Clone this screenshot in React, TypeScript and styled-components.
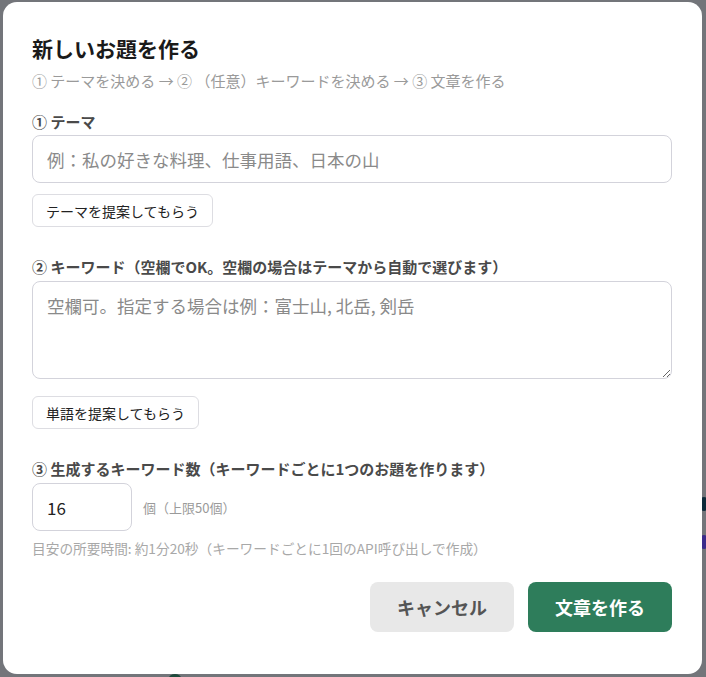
import styled, { createGlobalStyle } from "styled-components";

const GlobalStyle = createGlobalStyle`
  html, body {
    margin: 0;
    padding: 0;
    background: #73757a;
  }
  body {
    font-family: "Noto Sans CJK JP", "Noto Sans", sans-serif;
  }
  * {
    box-sizing: border-box;
  }
`;

export default function App() {
  return (
    <>
      <GlobalStyle />
      <Overlay>
        <PeekDot $top={497} $color="#0d2a3a" />
        <PeekDot $top={535} $color="#3b2a8a" />
        <BottomPeek />
        <Modal>
          <Title>{"新しいお題を作る"}</Title>
          <Steps>{"① テーマを決める → ② （任意）キーワードを決める → ③ 文章を作る"}</Steps>

          <Section $top={22}>
            <Label>{"① テーマ"}</Label>
            <TextInput placeholder={"例：私の好きな料理、仕事用語、日本の山"} />
            <SuggestButton>{"テーマを提案してもらう"}</SuggestButton>
          </Section>

          <Section $top={30}>
            <Label>{"② キーワード（空欄でOK。空欄の場合はテーマから自動で選びます）"}</Label>
            <TextArea placeholder={"空欄可。指定する場合は例：富士山, 北岳, 剣岳"} />
            <SuggestButton $top={17}>{"単語を提案してもらう"}</SuggestButton>
          </Section>

          <Section $top={30}>
            <Label>{"③ 生成するキーワード数（キーワードごとに1つのお題を作ります）"}</Label>
            <CountRow>
              <CountInput defaultValue={16} />
              <CountUnit>{"個（上限50個）"}</CountUnit>
            </CountRow>
            <Hint>{"目安の所要時間: 約1分20秒（キーワードごとに1回のAPI呼び出しで作成）"}</Hint>
          </Section>

          <Actions>
            <CancelButton>{"キャンセル"}</CancelButton>
            <PrimaryButton>{"文章を作る"}</PrimaryButton>
          </Actions>
        </Modal>
      </Overlay>
    </>
  );
}

const Overlay = styled.div`
  position: relative;
  width: 706px;
  height: 677px;
  padding: 2px 4px 3px 3px;
  background: #73757a;
  overflow: hidden;
`;

/* bits of the page behind the backdrop that show past the dialog edge */
const PeekDot = styled.div<{ $top: number; $color: string }>`
  position: absolute;
  top: ${({ $top }) => $top}px;
  right: -4px;
  width: 12px;
  height: 14px;
  border-radius: 50%;
  background: ${({ $color }) => $color};
`;

const BottomPeek = styled.div`
  position: absolute;
  left: 169px;
  bottom: -5px;
  width: 12px;
  height: 8px;
  border-radius: 50%;
  background: #1f4a3c;
`;

const Modal = styled.div`
  position: relative;
  display: flex;
  flex-direction: column;
  height: 100%;
  padding: 32px 30px 0 29px;
  background: #ffffff;
  border-radius: 14px;
`;

const Title = styled.h2`
  margin: 0;
  color: #1a1a1a;
  font-size: 21px;
  font-weight: 700;
  line-height: 28px;
`;

const Steps = styled.p`
  margin: 9px 0 0;
  color: #9a9a9a;
  font-size: 15px;
  line-height: 19px;
`;

const Section = styled.section<{ $top: number }>`
  display: flex;
  flex-direction: column;
  align-items: flex-start;
  margin-top: ${({ $top }) => $top}px;
`;

const Label = styled.div`
  color: #4a4a4a;
  font-size: 15px;
  font-weight: 700;
  line-height: 19px;
`;

const TextInput = styled.input`
  width: 100%;
  height: 48px;
  margin-top: 4px;
  padding: 0 14px;
  border: 1px solid #d3d3db;
  border-radius: 8px;
  color: #333333;
  font-family: inherit;
  font-size: 17.5px;
  outline: none;

  &::placeholder {
    color: #8a8a8a;
  }
`;

const TextArea = styled.textarea`
  display: block;
  width: 100%;
  height: 98px;
  margin-top: 5px;
  padding: 12px 14px;
  border: 1px solid #d3d3db;
  border-radius: 8px;
  color: #333333;
  font-family: inherit;
  font-size: 17.5px;
  line-height: 24px;
  outline: none;
  resize: vertical;

  &::placeholder {
    color: #8a8a8a;
  }
`;

const SuggestButton = styled.button<{ $top?: number }>`
  height: 33px;
  margin-top: ${({ $top }) => $top ?? 11}px;
  padding: 0 13px;
  border: 1px solid #dddde2;
  border-radius: 6px;
  background: #ffffff;
  color: #222222;
  font-family: inherit;
  font-size: 14px;
  cursor: pointer;
`;

const CountRow = styled.div`
  display: flex;
  align-items: center;
  gap: 11px;
  margin-top: 5px;
`;

const CountInput = styled.input`
  width: 100px;
  height: 48px;
  padding: 0 14px;
  border: 1px solid #d3d3db;
  border-radius: 8px;
  color: #222222;
  font-family: inherit;
  font-size: 17px;
  outline: none;
`;

const CountUnit = styled.span`
  color: #9a9a9a;
  font-size: 13px;
`;

const Hint = styled.div`
  margin-top: 9px;
  color: #a8a8a8;
  font-size: 13.7px;
  line-height: 17px;
`;

const Actions = styled.div`
  display: flex;
  justify-content: flex-end;
  gap: 14px;
  margin-top: 25px;
`;

const ActionButton = styled.button`
  width: 144px;
  height: 50px;
  border: none;
  border-radius: 8px;
  font-family: inherit;
  font-size: 18px;
  font-weight: 700;
  cursor: pointer;
`;

const CancelButton = styled(ActionButton)`
  background: #e8e8e8;
  color: #555555;
`;

const PrimaryButton = styled(ActionButton)`
  background: #2e7d5b;
  color: #ffffff;
`;
